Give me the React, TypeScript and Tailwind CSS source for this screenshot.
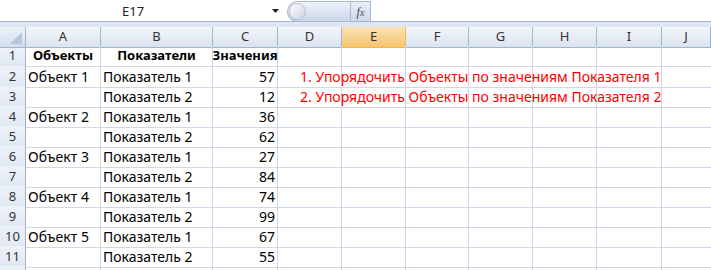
import React from "react";

const cols = ["A", "B", "C", "D", "E", "F", "G", "H", "I", "J"];

type Row = { a?: string; b?: string; c?: string; bold?: boolean; note?: string };
const rows: Row[] = [
  { a: "Объекты", b: "Показатели", c: "Значения", bold: true },
  { a: "Объект 1", b: "Показатель 1", c: "57", note: "1. Упорядочить Объекты по значениям Показателя 1" },
  { b: "Показатель 2", c: "12", note: "2. Упорядочить Объекты по значениям Показателя 2" },
  { a: "Объект 2", b: "Показатель 1", c: "36" },
  { b: "Показатель 2", c: "62" },
  { a: "Объект 3", b: "Показатель 1", c: "27" },
  { b: "Показатель 2", c: "84" },
  { a: "Объект 4", b: "Показатель 1", c: "74" },
  { b: "Показатель 2", c: "99" },
  { a: "Объект 5", b: "Показатель 1", c: "67" },
  { b: "Показатель 2", c: "55" },
  {},
];

const gridCols = "grid grid-cols-[26px_75px_112px_65px_64px_64px_63px_64px_64px_65px_1fr]";

export default function App() {
  return (
    <div
      className="w-[711px] h-[270px] overflow-hidden bg-white text-[14px] text-black"
      style={{ fontFamily: '"Noto Sans", "Liberation Sans", sans-serif' }}
    >
      {/* formula bar */}
      <div className="flex h-[22px] border-b border-[#a3b5cd] bg-white">
        <div className="relative w-[287px] flex items-center">
          <span className="absolute left-[122px] top-[2px] text-[13px] text-[#222]">E17</span>
          <svg className="absolute left-[272px] top-[9px]" width="7" height="4" viewBox="0 0 7 4">
            <path d="M0 0H7L3.5 4Z" fill="#222" />
          </svg>
        </div>
        <div className="flex items-stretch pt-[1px]">
          <div className="relative w-[63px] h-[21px] rounded-l-full border border-r-0 border-[#a6b8d0] bg-gradient-to-b from-[#eef3fa] to-[#c9d7ea]">
            <div className="absolute left-[1px] top-[1px] w-[17px] h-[17px] rounded-full bg-gradient-to-br from-[#ffffff] to-[#c8d2de] border border-[#b7c3d3]" />
          </div>
          <div className="w-[21px] h-[21px] border border-[#a6b8d0] bg-gradient-to-b from-[#e9eff8] to-[#cdd9ea] flex items-center justify-center">
            <span
              className="italic text-[12px] text-[#3b4a5e] leading-none"
              style={{ fontFamily: '"Liberation Serif", serif' }}
            >
              f<span className="text-[10px]">x</span>
            </span>
          </div>
        </div>
        <div className="flex-1 bg-white" />
      </div>
      <div className="h-[5px] bg-[#dde6f2]" />

      {/* column headers */}
      <div className={`${gridCols} h-[19px]`}>
        <div className="relative border-r border-b border-[#9eb6ce] bg-gradient-to-b from-[#eef3f9] to-[#d3dceb]">
          <svg className="absolute right-[3px] bottom-[3px]" width="12" height="12" viewBox="0 0 12 12">
            <path d="M12 0V12H0Z" fill="#b4c5dc" />
          </svg>
        </div>
        {cols.map((c) => (
          <div
            key={c}
            className={
              c === "E"
                ? "flex items-center justify-center border-r border-b border-[#f2b44f] bg-gradient-to-b from-[#fbe3b5] to-[#f6c56d] text-[13px] text-[#333]"
                : "flex items-center justify-center border-r border-b border-[#9eb6ce] bg-gradient-to-b from-[#f3f7fc] to-[#dae3ef] text-[13px] text-[#333]"
            }
          >
            {c}
          </div>
        ))}
        <div className="border-b border-[#9eb6ce] bg-gradient-to-b from-[#f3f7fc] to-[#dae3ef]" />
      </div>

      {/* body */}
      {rows.map((r, i) => (
        <div key={i} className={`${gridCols} h-[20px]`}>
          <div className="flex items-center justify-center border-r border-b border-[#9eb6ce] bg-gradient-to-b from-[#eef3f9] to-[#dfe7f2] text-[13px] text-[#333]">
            {i < 11 ? i + 1 : ""}
          </div>
          <div
            className={`flex items-center border-r border-b border-[#d0d7e5] whitespace-nowrap ${
              r.bold ? "justify-center font-bold text-[13px]" : "pl-[2px]"
            }`}
          >
            {r.a}
          </div>
          <div
            className={`flex items-center border-r border-b border-[#d0d7e5] whitespace-nowrap ${
              r.bold ? "justify-center font-bold text-[13px]" : "pl-[2px]"
            }`}
          >
            {r.b}
          </div>
          <div
            className={`flex items-center border-r border-b border-[#d0d7e5] whitespace-nowrap ${
              r.bold ? "justify-center font-bold text-[13px]" : "justify-end pr-[2px]"
            }`}
          >
            {r.c}
          </div>
          <div className="relative border-r border-b border-[#d0d7e5]">
            {r.note && (
              <span className="absolute left-[22px] top-0 h-full flex items-center whitespace-nowrap text-[#ff0000]">
                {r.note}
              </span>
            )}
          </div>
          {[0, 1, 2, 3, 4].map((k) => (
            <div key={k} className="border-r border-b border-[#d0d7e5]" />
          ))}
          <div className="border-b border-[#d0d7e5]" />
        </div>
      ))}
    </div>
  );
}
